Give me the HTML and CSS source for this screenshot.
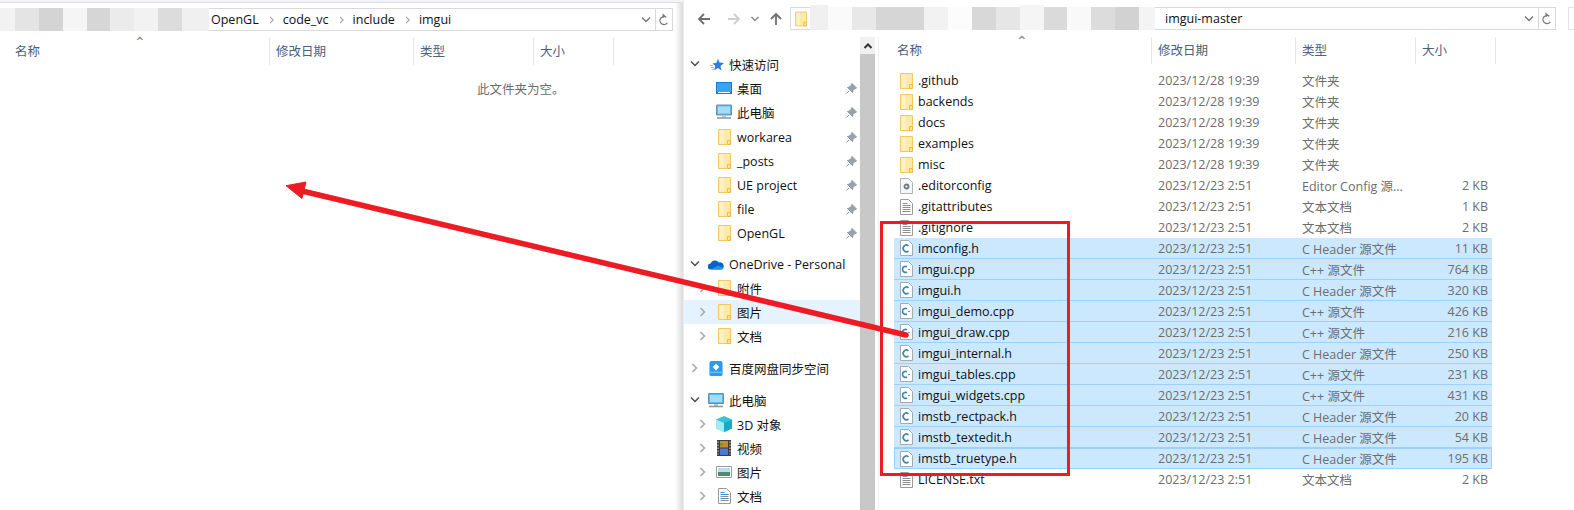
FILE: index.html
```html
<!DOCTYPE html>
<html lang="zh-CN">
<head>
    <meta charset="UTF-8">
    <title>imgui-master</title>
    <link rel="stylesheet" href="styles.css">
</head>
<body>
    <svg width="0" height="0" class="defs">
        <symbol id="folder" viewBox="0 0 13 16">
            <path d="M.5.5h12v15H.5z" fill="#fde9a8" stroke="#efcb62"/>
            <path d="M1.500 1.500h4v13h-4z" fill="#fff2c4"/>
            <path d="M9.500 15.500v-4h3v4z" fill="#fde28f" stroke="#e6bf4a"/>
        </symbol>
        <symbol id="doc" viewBox="0 0 13 16">
            <path d="M.5.5h8l4 4v11H.5z" fill="#fff" stroke="#9a9a9a"/>
            <path d="M2.500 4.500h5M2.500 6.500h8M2.500 8.500h8M2.500 10.500h8M2.500 12.500h8" stroke="#8e8e8e"/>
        </symbol>
        <symbol id="docb" viewBox="0 0 13 16">
            <path d="M.5.5h8l4 4v11H.5z" fill="#fff" stroke="#9a9a9a"/>
            <path d="M2.500 4.500h4M2.500 6.500h8M2.500 10.500h8" stroke="#3f8fd0"/>
            <path d="M2.500 8.500h8M2.500 12.500h8" stroke="#8e8e8e"/>
        </symbol>
        <symbol id="gear" viewBox="0 0 13 16">
            <path d="M.5.5h8l4 4v11H.5z" fill="#f6f6f6" stroke="#b4b4b4"/>
            <circle cx="6.500" cy="8.500" r="2" fill="#fff" stroke="#6c7884" stroke-width="1.800"/>
        </symbol>
        <symbol id="cfile" viewBox="0 0 13 16">
            <path d="M.5.5h8l4 4v11H.5z" fill="#fff" stroke="#a3aab0"/>
            <path d="M8.500 5.800A3.300 3.300 0 1 0 8.500 11" fill="none" stroke="#3f87ad" stroke-width="1.600"/>
        </symbol>
        <symbol id="cpp" viewBox="0 0 13 16">
            <path d="M.5.5h8l4 4v11H.5z" fill="#fff" stroke="#a3aab0"/>
            <path d="M7 5.800A3 3 0 1 0 7 11" fill="none" stroke="#3f87ad" stroke-width="1.600"/>
            <path d="M8 8.500h2" stroke="#6a9fbd"/>
        </symbol>
        <symbol id="pin" viewBox="0 0 11 11">
            <path d="M6 .5l4.500 4.500-1.500.5-2 2-.5 2-5-5 2-.5 2-2zM3 8l-2.500 2.500" fill="#9aa3ab" stroke="#8f989f"/>
        </symbol>
        <symbol id="chev-r" viewBox="0 0 8 10">
            <path d="M1.500 1l4 4-4 4" fill="none" stroke="#a6a6a6" stroke-width="1.500"/>
        </symbol>
        <symbol id="chev-d" viewBox="0 0 10 8">
            <path d="M1 1.500l4 4 4-4" fill="none" stroke="#4d4d4d" stroke-width="1.500"/>
        </symbol>
        <symbol id="monitor" viewBox="0 0 16 15">
            <path d="M.5.500h15v10H.5z" fill="#5cb8ee" stroke="#6d8fa8"/>
            <path d="M2 2h12v7H2z" fill="#a5dcf8"/>
            <path d="M6 11h4v2H6z" fill="#b9c4cc"/>
            <path d="M1 13.500h14" stroke="#8796a5" stroke-width="1.500"/>
        </symbol>
        <symbol id="reload" viewBox="0 0 12 14">
            <path d="M6 3.500A4 4 0 1 0 10 7.500" fill="none" stroke="#777" stroke-width="1.300" transform="rotate(35 6 7.500)"/>
            <path d="M4.500 .5L7.500 3 4.500 5.500z" fill="#777"/>
        </symbol>
    </svg>

    <div class="desktop">
        <!-- left window, empty folder -->
        <section class="win-left">
            <div class="top-line"></div>
            <div class="addr-left">
                <div class="mosaic">
                    <i style="width:15px;background:#f2f2f2"></i><i style="width:24px;background:#e4e4e4"></i><i style="width:24px;background:#d4d4d4"></i><i style="width:24px;background:#f5f5f5"></i><i style="width:23px;background:#d6d6d6"></i><i style="width:24px;background:#ebebeb"></i><i style="width:24px;background:#f2f2f2"></i><i style="width:24px;background:#dcdcdc"></i><i style="width:27px;background:#f0f0f0"></i>
                </div>
                <div class="crumbs">
                    <span>OpenGL</span><svg class="crumb-sep"><use href="#chev-r"/></svg>
                    <span>code_vc</span><svg class="crumb-sep"><use href="#chev-r"/></svg>
                    <span>include</span><svg class="crumb-sep"><use href="#chev-r"/></svg>
                    <span>imgui</span>
                </div>
                <svg class="drop"><use href="#chev-d"/></svg>
                <div class="refresh"><svg><use href="#reload"/></svg></div>
            </div>
            <div class="heads heads-left">
                <span class="sort">⌃</span>
                <div class="hd hd-l1">名称</div>
                <div class="hd hd-l2">修改日期</div>
                <div class="hd hd-l3">类型</div>
                <div class="hd hd-l4">大小</div>
            </div>
            <p class="empty">此文件夹为空。</p>
        </section>

        <!-- right window -->
        <section class="win-right">
            <div class="toolbar">
                <svg class="nav" viewBox="0 0 14 14"><path d="M13 7H2M7 2L2 7l5 5" fill="none" stroke="#6e6e6e" stroke-width="1.800"/></svg>
                <svg class="nav nav-fwd" viewBox="0 0 14 14"><path d="M1 7h11M7 2l5 5-5 5" fill="none" stroke="#cfcfcf" stroke-width="1.800"/></svg>
                <svg class="nav-mid" viewBox="0 0 10 8"><path d="M1.500 2l3.500 3.500L8.500 2" fill="none" stroke="#8a8a8a" stroke-width="1.500"/></svg>
                <svg class="nav" viewBox="0 0 14 14"><path d="M7 13V2M2 7l5-5 5 5" fill="none" stroke="#6e6e6e" stroke-width="1.800"/></svg>
                <div class="addr-right">
                    <svg class="addr-folder"><use href="#folder"/></svg>
                    <div class="mosaic">
                        <i class="tall" style="width:18px;background:#f0f0f0"></i><i style="width:24px;background:#fafafa"></i><i style="width:24px;background:#e8e8e8"></i><i style="width:48px;background:#d6d6d6"></i><i style="width:24px;background:#f2f2f2"></i><i style="width:24px;background:#fcfcfc"></i><i style="width:24px;background:#d8d8d8"></i><i style="width:24px;background:#e6e6e6"></i><i class="tall" style="width:24px;background:#f5f5f5"></i><i style="width:23px;background:#dadada"></i><i style="width:24px;background:#f9f9f9"></i><i style="width:24px;background:#dcdcdc"></i><i style="width:24px;background:#d2d2d2"></i><i style="width:16px;background:#f4f4f4"></i>
                    </div>
                    <div class="addr-text">imgui-master</div>
                    <svg class="drop"><use href="#chev-d"/></svg>
                    <div class="refresh"><svg><use href="#reload"/></svg></div>
                </div>
                <div class="search"></div>
            </div>

            <div class="body">
                <nav class="tree">
                    <div class="node top"><svg class="tw"><use href="#chev-d"/></svg>
                        <svg class="ic-top" viewBox="0 0 16 15"><path d="M10 1.500l1.500 4 4.500.5-3.500 3 1 4.500-3.500-2.500-4 2.500 1.300-4.500L4.500 6.500l4-.8z" fill="#2f7fd6"/><path d="M2 8.500h3M3 10.500h3M4 12.500h3" stroke="#8cc0ee"/></svg>
                        <span>快速访问</span></div>
                    <div class="node sub"><span class="tw"></span><svg class="ic-sub ic-wide" viewBox="0 0 16 12"><path d="M0 0h16v12H0z" fill="#0f7ddc"/><path d="M1 1h14v9H1z" fill="#39a5f2"/><path d="M2 10.500h12" stroke="#fff"/></svg><span class="lb">桌面</span><svg class="pin"><use href="#pin"/></svg></div>
                    <div class="node sub"><span class="tw"></span><svg class="ic-sub ic-wide"><use href="#monitor"/></svg><span class="lb">此电脑</span><svg class="pin"><use href="#pin"/></svg></div>
                    <div class="node sub nudge"><span class="tw"></span><svg class="ic-sub"><use href="#folder"/></svg><span class="lb">workarea</span><svg class="pin"><use href="#pin"/></svg></div>
                    <div class="node sub"><span class="tw"></span><svg class="ic-sub"><use href="#folder"/></svg><span class="lb">_posts</span><svg class="pin"><use href="#pin"/></svg></div>
                    <div class="node sub"><span class="tw"></span><svg class="ic-sub"><use href="#folder"/></svg><span class="lb">UE project</span><svg class="pin"><use href="#pin"/></svg></div>
                    <div class="node sub"><span class="tw"></span><svg class="ic-sub"><use href="#folder"/></svg><span class="lb">file</span><svg class="pin"><use href="#pin"/></svg></div>
                    <div class="node sub"><span class="tw"></span><svg class="ic-sub"><use href="#folder"/></svg><span class="lb">OpenGL</span><svg class="pin"><use href="#pin"/></svg></div>

                    <div class="node top gap"><svg class="tw"><use href="#chev-d"/></svg>
                        <svg class="ic-top" viewBox="0 0 16 11"><path d="M3 10.500a3 3 0 0 1-.5-6A5 5 0 0 1 11 3.500a3.500 3.500 0 0 1 2 7z" fill="#0a64c8"/><path d="M3 10.500l7-4 5.500 2.500q0 1.500-2 1.500z" fill="#2b8fe6"/></svg>
                        <span>OneDrive - Personal</span></div>
                    <div class="node sub"><svg class="tw-r"><use href="#chev-r"/></svg><svg class="ic-sub"><use href="#folder"/></svg><span class="lb">附件</span></div>
                    <div class="node sub on"><svg class="tw-r"><use href="#chev-r"/></svg><svg class="ic-sub"><use href="#folder"/></svg><span class="lb">图片</span></div>
                    <div class="node sub"><svg class="tw-r"><use href="#chev-r"/></svg><svg class="ic-sub"><use href="#folder"/></svg><span class="lb">文档</span></div>

                    <div class="node top gap gap-8"><svg class="tw-r tw-top"><use href="#chev-r"/></svg>
                        <svg class="ic-top" viewBox="0 0 14 16"><path d="M2 0h10q2 0 2 2v12q0 2-2 2H2q-2 0-2-2V2q0-2 2-2z" fill="#2b9bf0"/><path d="M7 3l3.500 3.500L7 10 3.500 6.500z" fill="#fff"/><path d="M0 12h14" stroke="#8fd0fa"/></svg>
                        <span>百度网盘同步空间</span></div>
                    <div class="node top gap gap-8"><svg class="tw"><use href="#chev-d"/></svg>
                        <svg class="ic-top"><use href="#monitor"/></svg>
                        <span>此电脑</span></div>
                    <div class="node sub"><svg class="tw-r"><use href="#chev-r"/></svg><svg class="ic-sub ic-wide" viewBox="0 0 16 16"><path d="M8 0l8 3.500v9L8 16l-8-3.500v-9z" fill="#35c4d8"/><path d="M0 3.500L8 7v9l-8-3.500z" fill="#a4ecf2"/><path d="M8 7l8-3.500v9L8 16z" fill="#18a9c4"/></svg><span class="lb">3D 对象</span></div>
                    <div class="node sub"><svg class="tw-r"><use href="#chev-r"/></svg><svg class="ic-sub ic-wide" viewBox="0 0 16 16"><path d="M1 0h14v16H1z" fill="#3c3c3c"/><path d="M2 1.500v13M14 1.500v13" stroke="#ddd" stroke-dasharray="1.500 1.500"/><path d="M4 1h8v6.500H4z" fill="#c78a2e"/><path d="M4 3.500h3v2H4z" fill="#5b9a4a"/><path d="M4 8.500h8V15H4z" fill="#4a79d6"/></svg><span class="lb">视频</span></div>
                    <div class="node sub"><svg class="tw-r"><use href="#chev-r"/></svg><svg class="ic-sub ic-wide" viewBox="0 0 16 12"><path d="M.5.500h15v11H.5z" fill="#fff" stroke="#9a9a9a"/><path d="M2 2h12v4H2z" fill="#bcdcf0"/><path d="M2 6h12v4H2z" fill="#4f8a6e"/></svg><span class="lb">图片</span></div>
                    <div class="node sub"><svg class="tw-r"><use href="#chev-r"/></svg><svg class="ic-sub"><use href="#docb"/></svg><span class="lb">文档</span></div>
                </nav>

                <div class="scrollbar">
                    <div class="sb-btn"><svg viewBox="0 0 10 8"><path d="M1.500 6L5 2.500 8.500 6" fill="none" stroke="#333" stroke-width="2"/></svg></div>
                    <div class="sb-thumb"></div>
                </div>

                <div class="pane">
                    <div class="heads heads-right">
                        <span class="sort">⌃</span>
                        <div class="hd col-name">名称</div>
                        <div class="hd col-date">修改日期</div>
                        <div class="hd col-type">类型</div>
                        <div class="hd col-size">大小</div>
                    </div>
                    <div class="rows">
                        <div class="row"><svg class="ri"><use href="#folder"/></svg><span class="nm">.github</span><span class="dt">2023/12/28 19:39</span><span class="ty">文件夹</span><span class="sz"></span></div>
                        <div class="row"><svg class="ri"><use href="#folder"/></svg><span class="nm">backends</span><span class="dt">2023/12/28 19:39</span><span class="ty">文件夹</span><span class="sz"></span></div>
                        <div class="row"><svg class="ri"><use href="#folder"/></svg><span class="nm">docs</span><span class="dt">2023/12/28 19:39</span><span class="ty">文件夹</span><span class="sz"></span></div>
                        <div class="row"><svg class="ri"><use href="#folder"/></svg><span class="nm">examples</span><span class="dt">2023/12/28 19:39</span><span class="ty">文件夹</span><span class="sz"></span></div>
                        <div class="row"><svg class="ri"><use href="#folder"/></svg><span class="nm">misc</span><span class="dt">2023/12/28 19:39</span><span class="ty">文件夹</span><span class="sz"></span></div>
                        <div class="row"><svg class="ri"><use href="#gear"/></svg><span class="nm">.editorconfig</span><span class="dt">2023/12/23 2:51</span><span class="ty">Editor Config 源...</span><span class="sz">2 KB</span></div>
                        <div class="row"><svg class="ri"><use href="#doc"/></svg><span class="nm">.gitattributes</span><span class="dt">2023/12/23 2:51</span><span class="ty">文本文档</span><span class="sz">1 KB</span></div>
                        <div class="row"><svg class="ri"><use href="#doc"/></svg><span class="nm">.gitignore</span><span class="dt">2023/12/23 2:51</span><span class="ty">文本文档</span><span class="sz">2 KB</span></div>
                        <div class="row sel"><svg class="ri"><use href="#cfile"/></svg><span class="nm">imconfig.h</span><span class="dt">2023/12/23 2:51</span><span class="ty">C Header 源文件</span><span class="sz">11 KB</span></div>
                        <div class="row sel"><svg class="ri"><use href="#cpp"/></svg><span class="nm">imgui.cpp</span><span class="dt">2023/12/23 2:51</span><span class="ty">C++ 源文件</span><span class="sz">764 KB</span></div>
                        <div class="row sel"><svg class="ri"><use href="#cfile"/></svg><span class="nm">imgui.h</span><span class="dt">2023/12/23 2:51</span><span class="ty">C Header 源文件</span><span class="sz">320 KB</span></div>
                        <div class="row sel"><svg class="ri"><use href="#cpp"/></svg><span class="nm">imgui_demo.cpp</span><span class="dt">2023/12/23 2:51</span><span class="ty">C++ 源文件</span><span class="sz">426 KB</span></div>
                        <div class="row sel"><svg class="ri"><use href="#cpp"/></svg><span class="nm">imgui_draw.cpp</span><span class="dt">2023/12/23 2:51</span><span class="ty">C++ 源文件</span><span class="sz">216 KB</span></div>
                        <div class="row sel"><svg class="ri"><use href="#cfile"/></svg><span class="nm">imgui_internal.h</span><span class="dt">2023/12/23 2:51</span><span class="ty">C Header 源文件</span><span class="sz">250 KB</span></div>
                        <div class="row sel"><svg class="ri"><use href="#cpp"/></svg><span class="nm">imgui_tables.cpp</span><span class="dt">2023/12/23 2:51</span><span class="ty">C++ 源文件</span><span class="sz">231 KB</span></div>
                        <div class="row sel"><svg class="ri"><use href="#cpp"/></svg><span class="nm">imgui_widgets.cpp</span><span class="dt">2023/12/23 2:51</span><span class="ty">C++ 源文件</span><span class="sz">431 KB</span></div>
                        <div class="row sel"><svg class="ri"><use href="#cfile"/></svg><span class="nm">imstb_rectpack.h</span><span class="dt">2023/12/23 2:51</span><span class="ty">C Header 源文件</span><span class="sz">20 KB</span></div>
                        <div class="row sel"><svg class="ri"><use href="#cfile"/></svg><span class="nm">imstb_textedit.h</span><span class="dt">2023/12/23 2:51</span><span class="ty">C Header 源文件</span><span class="sz">54 KB</span></div>
                        <div class="row sel focus"><svg class="ri"><use href="#cfile"/></svg><span class="nm">imstb_truetype.h</span><span class="dt">2023/12/23 2:51</span><span class="ty">C Header 源文件</span><span class="sz">195 KB</span></div>
                        <div class="row"><svg class="ri"><use href="#doc"/></svg><span class="nm">LICENSE.txt</span><span class="dt">2023/12/23 2:51</span><span class="ty">文本文档</span><span class="sz">2 KB</span></div>
                    </div>
                </div>
            </div>
        </section>

        <!-- annotations drawn on top of the screenshot -->
        <div class="mark-box"></div>
        <svg class="mark-arrow" viewBox="0 0 1574 510">
            <path d="M300 190.500L906 335" stroke="#ed1c24" stroke-width="5.500" stroke-linecap="round"/>
            <path d="M286 185.700L306 182l-4 16.500z" fill="#ed1c24" stroke="#ed1c24" stroke-linejoin="round"/>
        </svg>
    </div>
</body>
</html>
```

FILE: styles.css
```css
* {
    box-sizing: border-box;
}
html, body {
    margin: 0;
    height: 510px;
    overflow: hidden;
    background: #fff;
}
body {
    font-family: "Open Sans", "Noto Sans CJK SC", sans-serif;
    font-size: 12.5px;
    color: #111;
}
.defs {
    position: absolute;
}
svg {
    display: block;
    flex: none;
}
.desktop {
    position: relative;
    display: flex;
    width: 1574px;
    height: 510px;
}

/* left window */
.win-left {
    width: 683px;
    flex: none;
    background: linear-gradient(to right, #fff 675px, #dcdcdc 683px);
}
.top-line {
    height: 8px;
    background: linear-gradient(#f4f4f6 2px, #dcdce2 2px, #dcdce2 3px, transparent 3px);
}
.addr-left {
    display: flex;
    align-items: center;
    height: 23px;
    width: 673px;
    background: #fff;
    border: 1px solid #d9d9d9;
    border-left: 0;
}
.mosaic {
    display: flex;
    align-self: stretch;
    flex: none;
    margin-top: -1px;
    margin-bottom: -1px;
}
.mosaic i {
    display: block;
}
.mosaic i.tall {
    margin-top: -2px;
}
.crumbs {
    display: flex;
    align-items: center;
    flex: 1;
    padding-left: 2px;
}
.crumb-sep {
    width: 6px;
    height: 8px;
    margin: 0 8px 0 10px;
}
.drop {
    width: 10px;
    height: 8px;
    margin-right: 4px;
    opacity: .75;
}
.refresh {
    display: flex;
    align-items: center;
    justify-content: center;
    width: 17px;
    align-self: stretch;
    border-left: 1px solid #d9d9d9;
}
.refresh svg {
    width: 12px;
    height: 14px;
}
.heads {
    position: relative;
    display: flex;
    color: #4c607a;
}
.heads-left {
    margin-top: 7px;
}
.hd {
    height: 27px;
    padding-left: 6px;
    line-height: 28px;
    border-right: 1px solid #e5e5e5;
}
.hd-l1 {
    width: 270px;
    padding-left: 15px;
}
.hd-l2 {
    width: 144px;
}
.hd-l3 {
    width: 120px;
}
.hd-l4 {
    width: 80px;
}
.sort {
    position: absolute;
    top: -3px;
    color: #888;
    font-size: 14px;
    line-height: 14px;
}
.heads-left .sort {
    left: 134px;
}
.empty {
    margin: 14px 0 0;
    padding-left: 477px;
    color: #6d6d6d;
}

/* right window */
.win-right {
    flex: 1;
    min-width: 0;
    border-left: 1px solid #ececec;
}
.toolbar {
    display: flex;
    align-items: center;
    height: 37px;
    padding: 7px 0 7px 13px;
}
.nav {
    width: 14px;
    height: 14px;
}
.nav-fwd {
    margin-left: 16px;
}
.nav-mid {
    width: 10px;
    height: 8px;
    margin: 0 9px 0 9px;
}
.addr-right {
    display: flex;
    align-items: center;
    width: 766px;
    height: 23px;
    margin-left: 7px;
    border: 1px solid #d9d9d9;
}
.addr-folder {
    width: 12px;
    height: 16px;
    margin: 0 3px 0 4px;
}
.addr-text {
    flex: 1;
    padding-left: 10px;
}
.search {
    width: 6px;
    height: 23px;
    margin-left: 12px;
    border: 1px solid #e3e3e3;
    border-right: 0;
}
.body {
    display: flex;
    height: 473px;
}

/* navigation tree */
.tree {
    width: 176px;
    flex: none;
    padding-top: 15px;
}
.node {
    display: flex;
    align-items: center;
    height: 24px;
    white-space: nowrap;
}
.node.nudge {
    margin-top: 1px;
}
.node.gap {
    margin-top: 7px;
}
.node.gap-8 {
    margin-top: 8px;
}
.top .tw {
    width: 10px;
    height: 8px;
    margin: 0 8px 0 6px;
}
.top .tw-top {
    margin: 0 9px 0 7px;
}
.sub .tw-r {
    margin: 0 7px 0 15px;
}
.tw-r {
    width: 8px;
    height: 10px;
    flex: none;
}
.ic-top {
    width: 16px;
    height: 15px;
    margin-right: 5px;
}
.ic-sub {
    width: 13px;
    height: 16px;
    margin-left: 4px;
    margin-right: 6px;
}
.sub > span.tw {
    width: 30px;
    flex: none;
}
.ic-wide {
    width: 16px;
    margin-left: 2px;
    margin-right: 5px;
}
.lb {
    flex: 1;
}
.pin {
    width: 11px;
    height: 11px;
    margin-right: 3px;
}
.node.on {
    background: #e5f3ff;
}

/* scrollbar */
.scrollbar {
    width: 15px;
    flex: none;
    display: flex;
    flex-direction: column;
    background: #f0f0f0;
}
.sb-btn {
    display: flex;
    align-items: center;
    justify-content: center;
    height: 17px;
    background: #f0f0f0;
}
.sb-btn svg {
    width: 10px;
    height: 8px;
}
.sb-thumb {
    flex: 1;
    background: #c8c8c8;
}

/* file list */
.pane {
    flex: 1;
    min-width: 0;
    margin-left: 3px;
    padding-left: 15px;
    border-left: 1px solid #f0f0f0;
}
.heads-right {
    height: 33px;
}
.heads-right .sort {
    left: 122px;
}
.col-name {
    width: 258px;
    padding-left: 3px;
}
.col-date {
    width: 144px;
}
.col-type {
    width: 120px;
}
.col-size {
    width: 80px;
}
.row {
    display: flex;
    align-items: center;
    width: 598px;
    height: 21px;
    color: #6d6d6d;
    white-space: nowrap;
}
.row.sel {
    background: #cce8ff;
    border-bottom: 1px solid #99d1ff;
}
.row.focus {
    border: 1px solid #99d1ff;
}
.ri {
    width: 13px;
    height: 16px;
    margin: 0 5px 0 6px;
}
.focus .ri {
    margin-left: 5px;
}
.nm {
    width: 240px;
    color: #111;
}
.dt {
    width: 144px;
}
.ty {
    width: 120px;
}
.sz {
    flex: 1;
    padding-right: 4px;
    text-align: right;
}
.focus .sz {
    padding-right: 3px;
}
.mark-box {
    position: absolute;
    left: 880px;
    top: 221px;
    width: 190px;
    height: 255px;
    border: 3px solid #ed1c24;
}
.mark-arrow {
    position: absolute;
    left: 0;
    top: 0;
    width: 1574px;
    height: 510px;
}
```
